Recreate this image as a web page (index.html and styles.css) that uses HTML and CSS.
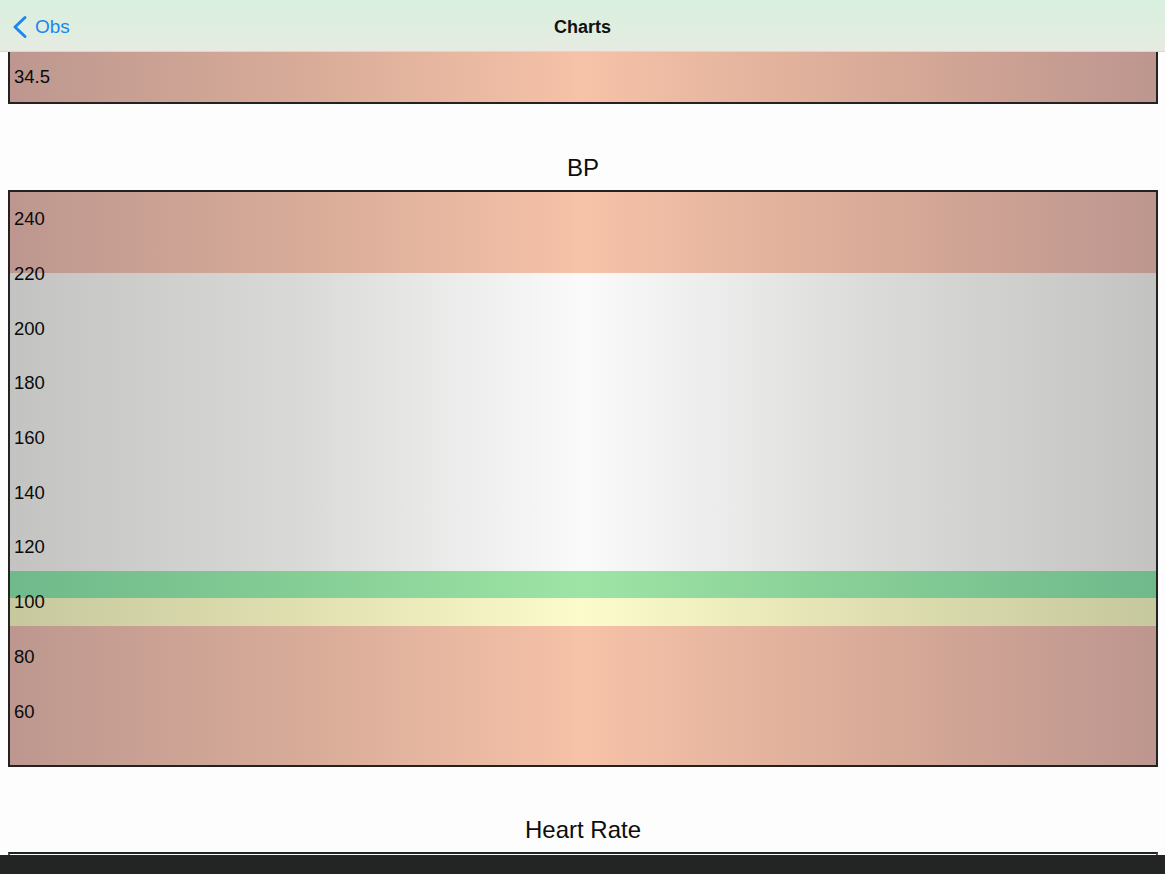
FILE: index.html
```html
<!DOCTYPE html>
<html lang="en">
<head>
<meta charset="utf-8">
<title>Charts</title>
<link rel="stylesheet" href="styles.css">
</head>
<body>
<header class="navbar">
  <a class="back" href="#">
    <svg class="chevron" width="16" height="24" viewBox="0 0 16 24" aria-hidden="true">
      <path d="M13 2.5 L3 12 L13 21.5" fill="none" stroke="#1c86f2" stroke-width="3" stroke-linecap="round" stroke-linejoin="round"/>
    </svg>
    <span>Obs</span>
  </a>
  <h1 class="nav-title">Charts</h1>
  <span class="nav-spacer"></span>
</header>

<main class="charts">
  <section class="chart chart--cut-top">
    <div class="plot plot--temp">
      <div class="band band--red band--fill"></div>
      <div class="labels labels--single"><span>34.5</span></div>
    </div>
  </section>

  <section class="chart chart--bp">
    <h2 class="chart-title">BP</h2>
    <div class="plot plot--bp">
      <div class="band band--red" style="height:81px"></div>
      <div class="band band--grey" style="height:298px"></div>
      <div class="band band--green" style="height:27px"></div>
      <div class="band band--yellow" style="height:28px"></div>
      <div class="band band--red band--fill"></div>
      <div class="labels">
        <span>240</span><span>220</span><span>200</span><span>180</span><span>160</span>
        <span>140</span><span>120</span><span>100</span><span>80</span><span>60</span>
      </div>
    </div>
  </section>

  <section class="chart chart--hr">
    <h2 class="chart-title">Heart Rate</h2>
    <div class="plot plot--cut-bottom"></div>
  </section>
</main>

<footer class="dock"></footer>
</body>
</html>
```

FILE: styles.css
```css
html, body {
  margin: 0;
  padding: 0;
  height: 874px;
  overflow: hidden;
}

body {
  background: #fdfdfd;
  font-family: "Liberation Sans", Arial, sans-serif;
  color: #141414;
  display: flex;
  flex-direction: column;
}

.navbar {
  height: 51px;
  border-bottom: 1px solid #d6d9d2;
  background: linear-gradient(to bottom, #d9efdf 0%, #dfeee0 55%, #e7eae2 100%);
  display: grid;
  grid-template-columns: 1fr auto 1fr;
  align-items: center;
  padding: 0 12px;
  flex: none;
}

.back {
  display: flex;
  align-items: center;
  gap: 7px;
  color: #1c86f2;
  text-decoration: none;
  font-size: 19px;
  justify-self: start;
  margin-top: 3px;
}

.chevron {
  display: block;
}

.nav-title {
  margin: 4px 0 0;
  font-size: 18px;
  font-weight: bold;
  color: #111;
}

.charts {
  flex: 1;
  display: flex;
  flex-direction: column;
  padding: 0 7px 0 8px;
  min-height: 0;
}

.chart {
  display: flex;
  flex-direction: column;
}

.chart-title {
  margin: 0 0 8px;
  font-size: 24px;
  line-height: 28px;
  font-weight: normal;
  text-align: center;
  color: #0d0d0d;
}

.plot {
  position: relative;
  border: 2px solid #222;
  display: flex;
  flex-direction: column;
}

.plot--temp {
  border-top: none;
  height: 50px;
}

.chart--bp {
  padding-top: 50px;
}

.plot--bp {
  height: 573px;
}

.chart--hr {
  padding-top: 49px;
}

.plot--cut-bottom {
  border-bottom: none;
  border-left-color: #555;
  border-right-color: #555;
  height: 1px;
}

.band {
  flex: none;
}

.band--fill {
  flex: 1;
}

.band--red {
  background: linear-gradient(to right, #bd978f 0%, #d7ab98 25%, #f6c2a8 50%, #d9ab98 75%, #bd968f 100%);
}

.band--grey {
  background: linear-gradient(to right, #c3c4c2 0%, #d9dad8 25%, #fafafa 50%, #dbdcda 75%, #c3c4c2 100%);
}

.band--green {
  background: linear-gradient(to right, #6fb98b 0%, #84cd95 25%, #9ee4a5 50%, #86cd96 75%, #6fb98b 100%);
}

.band--yellow {
  background: linear-gradient(to right, #c7c89e 0%, #dfdfb0 25%, #fbfbcb 50%, #dfdfb1 75%, #c6c89d 100%);
}

.labels {
  position: absolute;
  inset: 0;
  display: flex;
  flex-direction: column;
  padding-left: 4px;
  font-size: 18.5px;
  color: #0a0a0a;
  pointer-events: none;
}

.labels span {
  height: 54.7px;
  display: flex;
  align-items: center;
}

.labels--single span {
  height: 50px;
}

.dock {
  flex: none;
  height: 19px;
  background: #232524;
}
```
